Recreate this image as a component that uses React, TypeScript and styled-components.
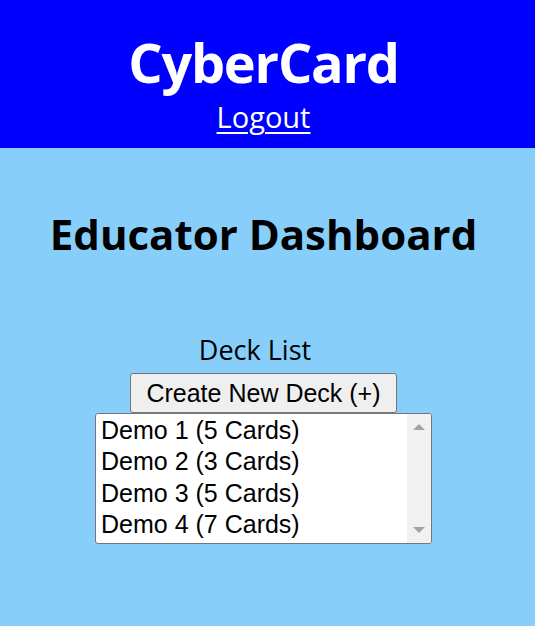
import React from "react";
import styled, { createGlobalStyle } from "styled-components";

const GlobalStyle = createGlobalStyle`
  html, body { margin: 0; padding: 0; background: #87cefa; }
  body { font-family: "Open Sans", "Noto Sans", sans-serif; }
`;

const Header = styled.header`
  background: #0000ff;
  height: 148px;
  display: flex;
  flex-direction: column;
  align-items: center;
  box-sizing: border-box;
  padding: 30px 8px 0 0;
`;

const Brand = styled.div`
  color: #fff;
  font-weight: 700;
  font-size: 54px;
  line-height: 64px;
  letter-spacing: -1.2px;
`;

const LogoutLink = styled.a`
  margin-top: 4px;
  color: #fff;
  font-size: 29px;
  line-height: 38px;
  text-decoration: underline;
  text-decoration-thickness: 2px;
  text-underline-offset: 4px;
  cursor: pointer;
`;

const Main = styled.main`
  display: flex;
  flex-direction: column;
  align-items: center;
  padding-right: 8px;
`;

const Title = styled.h1`
  margin: 58px 0 0;
  font-size: 42px;
  line-height: 56px;
  font-weight: 700;
  color: #000;
`;

const SectionLabel = styled.div`
  margin: 71px 0 6px;
  padding-right: 17px;
  font-size: 27px;
  line-height: 34px;
  color: #000;
`;

const Button = styled.button`
  font-family: "Liberation Sans", Arial, sans-serif;
  font-size: 25px;
  height: 40px;
  padding: 0 15px;
  background: #efefef;
  border: 1px solid #767676;
  border-radius: 3px;
  color: #000;
`;

const ListBox = styled.div`
  width: 337px;
  height: 131px;
  box-sizing: border-box;
  border: 1px solid #767676;
  border-radius: 3px;
  background: #fff;
  display: flex;
  overflow: hidden;
`;

const Options = styled.div`
  flex: 1;
  padding-top: 1px;
`;

const Option = styled.div`
  font-family: "Liberation Sans", Arial, sans-serif;
  font-size: 25px;
  line-height: 31.3px;
  padding-left: 5px;
  color: #000;
  white-space: nowrap;
`;

const ScrollTrack = styled.div`
  width: 24px;
  background: #f1f1f1;
  display: flex;
  flex-direction: column;
  justify-content: space-between;
  align-items: center;
  padding: 10px 0;
`;

const decks = [
  { name: "Demo 1", cards: 5 },
  { name: "Demo 2", cards: 3 },
  { name: "Demo 3", cards: 5 },
  { name: "Demo 4", cards: 7 },
];

const Arrow = ({ down }: { down?: boolean }) => (
  <svg width="12" height="6" viewBox="0 0 12 6">
    <polygon points={down ? "0,0 12,0 6,6" : "6,0 12,6 0,6"} fill="#a3a3a3" />
  </svg>
);

export default function App() {
  return (
    <>
      <GlobalStyle />
      <Header>
        <Brand>CyberCard</Brand>
        <LogoutLink>Logout</LogoutLink>
      </Header>
      <Main>
        <Title>Educator Dashboard</Title>
        <SectionLabel>Deck List</SectionLabel>
        <Button>Create New Deck (+)</Button>
        <ListBox>
          <Options>
            {decks.map((d) => (
              <Option key={d.name}>
                {d.name} ({d.cards} Cards)
              </Option>
            ))}
          </Options>
          <ScrollTrack>
            <Arrow />
            <Arrow down />
          </ScrollTrack>
        </ListBox>
      </Main>
    </>
  );
}
